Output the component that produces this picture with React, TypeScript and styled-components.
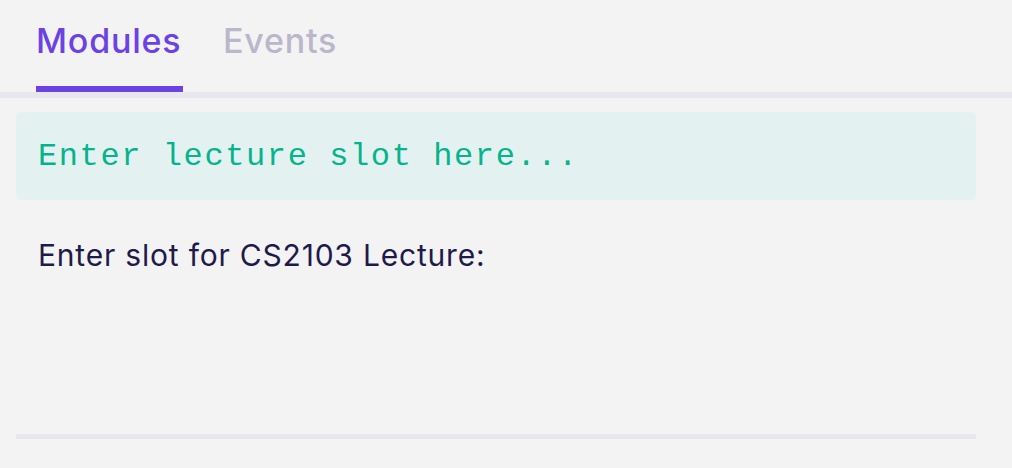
import React from "react";
import styled, { createGlobalStyle } from "styled-components";

const Global = createGlobalStyle`
  html, body { margin: 0; padding: 0; background: #f3f3f3; }
  body { font-family: Inter, "Noto Sans", sans-serif; }
`;

const Page = styled.div`
  width: 1012px;
  height: 468px;
  background: #f3f3f3;
  display: flex;
  flex-direction: column;
`;

const TabBar = styled.div`
  display: flex;
  gap: 40px;
  padding-left: 36px;
  height: 92px;
  border-bottom: 6px solid #e8e7ee;
  align-items: stretch;
`;

const Tab = styled.div<{ $active?: boolean }>`
  font-family: Inter, "Noto Sans", sans-serif;
  font-size: 34px;
  font-weight: 500;
  letter-spacing: 0.8px;
  color: ${(p) => (p.$active ? "#6b42e6" : "#bab7ca")};
  padding-top: 20px;
  box-sizing: border-box;
  border-bottom: 6px solid ${(p) => (p.$active ? "#6b42e6" : "transparent")};
  width: ${(p) => (p.$active ? "147px" : "auto")};
`;

const Content = styled.div`
  padding: 14px 36px 0 16px;
  display: flex;
  flex-direction: column;
  flex: 1;
`;

const SlotInput = styled.input`
  box-sizing: border-box;
  height: 88px;
  width: 100%;
  border: none;
  outline: none;
  border-radius: 6px;
  background: #e3f2f1;
  padding: 0 22px;
  font-family: "Courier New", Courier, "Nimbus Mono PS", FreeMono, "Liberation Mono", monospace;
  font-size: 32px;
  letter-spacing: 1.6px;
  color: #05b48c;
  &::placeholder {
    color: #05b48c;
    opacity: 1;
  }
`;

const Label = styled.div`
  margin-top: 37px;
  padding-left: 22px;
  font-family: Inter, "Noto Sans", sans-serif;
  font-size: 30px;
  letter-spacing: 0.8px;
  color: #1e1a4b;
`;

const Divider = styled.div`
  margin-top: auto;
  margin-bottom: 29px;
  height: 5px;
  background: #e8e7ee;
`;

export default function App() {
  return (
    <Page>
      <Global />
      <TabBar>
        <Tab $active>Modules</Tab>
        <Tab>Events</Tab>
      </TabBar>
      <Content>
        <SlotInput placeholder="Enter lecture slot here..." />
        <Label>Enter slot for CS2103 Lecture:</Label>
        <Divider />
      </Content>
    </Page>
  );
}
